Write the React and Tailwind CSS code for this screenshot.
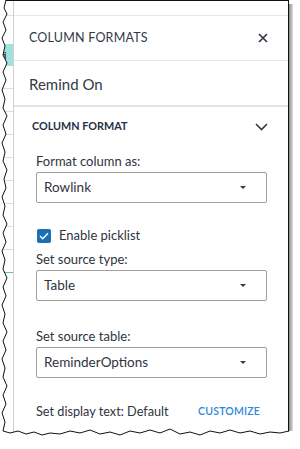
import React from 'react';

const font = { fontFamily: 'Lato, "Noto Sans", sans-serif' };

const Caret = () => (
  <svg width="6" height="3" viewBox="0 0 6 3" className="fill-[#3b3a39]">
    <path d="M0 0h6L3 3z" />
  </svg>
);

const SelectBox = ({ value }) => (
  <div className="flex h-[31px] items-center justify-between rounded-[2px] border border-[#a19f9d] bg-white pl-[7px] pr-[20px] text-[13.5px] text-[#2f3440]">
    <span>{value}</span>
    <Caret />
  </div>
);

const Field = ({ label, value, className = '' }) => (
  <div className={className}>
    <div className="mb-[2px] text-[13px] leading-[18px] text-[#2f3440]">{label}</div>
    <SelectBox value={value} />
  </div>
);

const TornEdges = () => (
  <svg className="pointer-events-none absolute inset-0" width="300" height="449" viewBox="0 0 300 449">
    {/* white outside the left tear */}
    <path
      d="M0 0 L6 0 L4 8 L7 14 L3 22 L6 30 L2 38 L5 46 L3 55 L7 63 L3 72 L6 80 L2 90 L5 99 L3 108 L7 116 L3 125 L6 134 L2 143 L5 152 L3 161 L7 170 L4 179 L6 188 L2 197 L5 206 L3 215 L7 224 L3 233 L6 242 L2 251 L5 260 L3 269 L7 278 L3 287 L6 296 L2 305 L5 314 L3 323 L7 332 L3 341 L6 350 L2 359 L5 368 L3 377 L7 386 L3 395 L6 404 L2 413 L5 422 L3 431 L0 431 Z"
      fill="white"
    />
    <path
      d="M6 0 L4 8 L7 14 L3 22 L6 30 L2 38 L5 46 L3 55 L7 63 L3 72 L6 80 L2 90 L5 99 L3 108 L7 116 L3 125 L6 134 L2 143 L5 152 L3 161 L7 170 L4 179 L6 188 L2 197 L5 206 L3 215 L7 224 L3 233 L6 242 L2 251 L5 260 L3 269 L7 278 L3 287 L6 296 L2 305 L5 314 L3 323 L7 332 L3 341 L6 350 L2 359 L5 368 L3 377 L7 386 L3 395 L6 404 L2 413 L5 422 L3 431"
      fill="none"
      stroke="#111"
      strokeWidth="1"
    />
    {/* bottom tear shadow */}
    <path
      d="M6 436 L20 438 L32 435 L44 439 L58 436 L72 437 L86 434 L100 438 L114 436 L128 439 L142 435 L156 437 L170 433 L184 438 L198 436 L212 439 L226 435 L240 437 L254 434 L268 438 L282 436 L293 437"
      fill="none"
      stroke="#9a9a9a"
      strokeWidth="3"
      opacity="0.6"
    />
    <path
      d="M0 449 L0 431 L3 431 L10 433 L18 431 L26 434 L34 432 L42 435 L50 433 L60 434 L70 431 L80 433 L90 430 L100 434 L110 432 L120 435 L130 431 L140 433 L150 430 L160 433 L170 429 L180 434 L190 432 L200 435 L210 431 L220 433 L230 430 L240 433 L250 431 L260 434 L270 432 L280 433 L290 431 L300 431 L300 449 Z"
      fill="white"
    />
    <path
      d="M3 431 L10 433 L18 431 L26 434 L34 432 L42 435 L50 433 L60 434 L70 431 L80 433 L90 430 L100 434 L110 432 L120 435 L130 431 L140 433 L150 430 L160 433 L170 429 L180 434 L190 432 L200 435 L210 431 L220 433 L230 430 L240 433 L250 431 L260 434 L270 432 L280 433 L289 431"
      fill="none"
      stroke="#111"
      strokeWidth="1"
    />
  </svg>
);

export default function App() {
  return (
    <div className="relative h-[449px] w-[300px] overflow-hidden bg-white" style={font}>
      <div className="flex h-[436px] w-[293px]">
        <div className="flex h-full w-[289px] flex-col border-t border-r border-[#111]">
          <div className="flex flex-1">
            {/* sliver of the grid behind the panel */}
            <div className="flex w-[13px] flex-col pt-[14px]">
              <div className="h-[29px] border-t border-[#e1dfdd]" />
              <div className="flex h-[22px] items-center overflow-hidden bg-[#9fe3dc] text-[10px] font-bold text-[#323130]">ti</div>
              <div className="h-[23px] border-b border-[#e1dfdd]" />
              <div className="h-[23px] border-b border-[#e1dfdd]" />
              <div className="h-[23px] border-b border-[#e1dfdd]" />
              <div className="h-[23px] border-b border-[#e1dfdd]" />
              <div className="h-[23px] border-b border-[#e1dfdd]" />
              <div className="h-[23px] border-b border-[#e1dfdd]" />
              <div className="h-[23px] border-b border-[#e1dfdd]" />
              <div className="h-[23px] border-b border-[#e1dfdd]" />
              <div className="h-[23px] border-b border-[#58c3b8]" />
            </div>
            <div className="flex flex-1 flex-col border-l border-[#d2d0ce] pt-[14px]">
              <div className="flex h-[46px] items-center justify-between border-t border-b border-[#e6e6e6] pl-[15px] pr-[20px]">
                <span className="text-[12.5px] tracking-[0.2px] text-[#323a45]">COLUMN FORMATS</span>
                <svg width="10" height="10" viewBox="0 0 10 10" className="stroke-[#323a45]" strokeWidth="1.7">
                  <path d="M1 1l8 8M9 1l-8 8" />
                </svg>
              </div>
              <div className="flex h-[46px] items-center border-b-2 border-[#e3e3e3] pl-[15px] pt-[2px] text-[15px] text-[#323a45]">
                Remind On
              </div>
              <div className="flex h-[39px] items-center justify-between pl-[18px] pr-[20px]">
                <span className="text-[10.8px] font-bold text-[#253243]">COLUMN FORMAT</span>
                <svg width="13" height="8" viewBox="0 0 13 8" fill="none" className="stroke-[#323a45]" strokeWidth="1.6">
                  <path d="M1 1l5.5 5.5L12 1" />
                </svg>
              </div>
              <div className="flex flex-col pl-[22px] pr-[21px] pt-[6px]">
                <Field label="Format column as:" value="Rowlink" />
                <label className="mt-[23px] flex h-[20px] items-center gap-[8px]">
                  <span className="ml-[1px] flex h-[14px] w-[14px] items-center justify-center rounded-[2px] bg-[#1a6fb5]">
                    <svg width="10" height="8" viewBox="0 0 10 8" fill="none" stroke="white" strokeWidth="1.5">
                      <path d="M1 4l2.7 2.7L9 1.3" />
                    </svg>
                  </span>
                  <span className="text-[13px] text-[#2f3440]">Enable picklist</span>
                </label>
                <Field className="mt-[4px]" label="Set source type:" value="Table" />
                <Field className="mt-[26px]" label="Set source table:" value="ReminderOptions" />
                <div className="mt-[24px] flex h-[20px] items-center justify-between pr-[7px]">
                  <span className="text-[12.7px] text-[#2f3440]">Set display text: Default</span>
                  <span className="text-[10.5px] font-semibold tracking-[0.2px] text-[#2b88d8]">CUSTOMIZE</span>
                </div>
              </div>
            </div>
          </div>
        </div>
        <div className="mt-[4px] w-[4px] bg-gradient-to-r from-[#8a8a8a] to-[#e0e0e0]" />
      </div>
      <TornEdges />
    </div>
  );
}
